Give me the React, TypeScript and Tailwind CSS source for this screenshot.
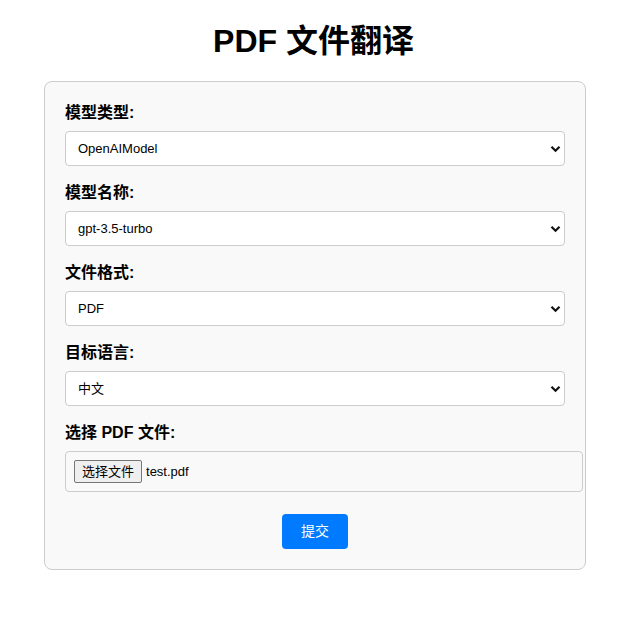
const FONT = { fontFamily: '"Liberation Sans", Arial, "Noto Sans CJK SC", sans-serif' };

const fields = [
  { label: '模型类型:', value: 'OpenAIModel' },
  { label: '模型名称:', value: 'gpt-3.5-turbo' },
  { label: '文件格式:', value: 'PDF' },
  { label: '目标语言:', value: '中文' },
];

function Chevron() {
  return (
    <svg width="11" height="8" viewBox="0 0 11 8" className="absolute right-[3px] top-1/2 -translate-y-1/2">
      <path d="M1.5 1.8 L5.5 5.8 L9.5 1.8" fill="none" stroke="#111" strokeWidth="2.2" />
    </svg>
  );
}

export default function App() {
  return (
    <div className="min-h-[624px] bg-white text-black" style={FONT}>
      <h1 className="pt-[23px] text-center text-[32px] font-bold leading-[37px]">PDF 文件翻译</h1>

      <form className="ml-[44px] mt-[21px] w-[542px] rounded-[8px] border border-[#cccccc] bg-[#f9f9f9] p-[20px]">
        {fields.map((f) => (
          <div key={f.label} className="mb-[16px]">
            <label className="mb-[7px] block text-[16px] font-bold leading-[22px]">{f.label}</label>
            <div className="relative h-[35px] w-full rounded-[4px] border border-[#cccccc] bg-white">
              <span className="absolute left-[12px] top-1/2 -translate-y-1/2 text-[13px]">{f.value}</span>
              <Chevron />
            </div>
          </div>
        ))}

        <div>
          <label className="mb-[7px] block text-[16px] font-bold leading-[22px]">选择 PDF 文件:</label>
          <div className="flex h-[41px] w-[518px] items-center rounded-[4px] border border-[#cccccc] bg-[#f9f9f9] px-[8px]">
            <span className="flex h-[23px] items-center rounded-[2px] border border-[#767676] bg-[#efefef] px-[7px] text-[13px]">
              选择文件
            </span>
            <span className="ml-[4px] text-[13px]">test.pdf</span>
          </div>
        </div>

        <div className="mt-[22px] flex justify-center">
          <button
            type="button"
            className="h-[35px] w-[66px] rounded-[4px] bg-[#007bff] text-[14px] text-white"
          >
            提交
          </button>
        </div>
      </form>
    </div>
  );
}
